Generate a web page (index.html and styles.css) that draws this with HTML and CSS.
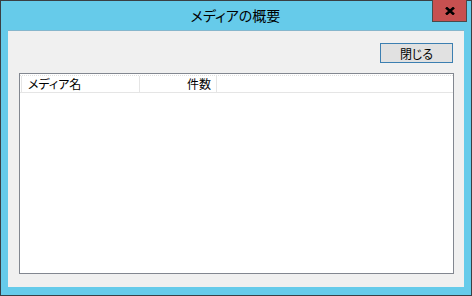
FILE: index.html
```html
<!DOCTYPE html>
<html lang="ja">
<head>
<meta charset="utf-8">
<link rel="stylesheet" href="styles.css">
</head>
<body>
<div class="window">
  <div class="titlebar">
    <span class="title">メディアの概要</span>
    <div class="close"><svg width="10" height="8" viewBox="0 0 10 8"><path d="M1 0.5 L9 7.5 M9 0.5 L1 7.5" stroke="#000" stroke-width="2.6"/></svg></div>
  </div>
  <div class="client">
    <div class="toolbar"><button class="btn">閉じる</button></div>
    <div class="list">
      <div class="header">
        <div class="col col-name">メディア名</div>
        <div class="col col-count">件数</div>
        <div class="col col-rest"></div>
      </div>
    </div>
  </div>
</div>
</body>
</html>
```
FILE: styles.css
```css
* { box-sizing: border-box; }
html, body { margin: 0; padding: 0; background: #2b2b2b; }
body { font-family: "Noto Sans CJK JP", "Noto Sans", sans-serif; font-feature-settings: "palt"; }
.window {
  position: relative;
  width: 472px;
  height: 296px;
  border: 1px solid #3a3f44;
  background: #66cbea;
  padding: 0 7px 8px 7px;
  display: flex;
  flex-direction: column;
}
.titlebar {
  height: 29px;
  display: flex;
  align-items: center;
  justify-content: center;
}
.title {
  font-size: 14px;
  color: #000;
  margin-top: -1px;
  margin-left: -1px;
}
.close {
  position: absolute;
  top: -1px;
  right: 4px;
  width: 35px;
  height: 22px;
  background: #c75050;
  border: 1px solid #4a4a4a;
  border-top: none;
  display: flex;
  align-items: center;
  justify-content: center;
  padding-top: 1px;
}
.client {
  flex: 1;
  background: #f0f0f0;
  border-top: 1px solid #86b6cc;
  padding: 12px 10px 13px 11px;
  display: flex;
  flex-direction: column;
}
.toolbar {
  display: flex;
  justify-content: flex-end;
  padding-right: 1px;
}
.btn {
  width: 73px;
  height: 20px;
  border: 1px solid #3c7fb1;
  background: #e1e1e1;
  font-family: inherit;
  font-feature-settings: "palt";
  font-size: 12px;
  color: #000;
  padding: 0;
  line-height: 17px;
}
.list {
  margin-top: 10px;
  flex: 1;
  border: 1px solid #828790;
  background: #fff;
}
.header {
  display: flex;
  height: 18px;
  border-bottom: 1px solid #e5e5e5;
  border-top: 1px dotted #e0e0e0;
  margin-top: 1px;
}
.col {
  font-size: 12px;
  line-height: 16px;
  color: #000;
  border-right: 1px solid #e5e5e5;
}
.col-name { width: 119px; padding-left: 6px; margin-left: 1px; border-left: 1px solid #e5e5e5; }
.col-count { width: 77px; text-align: right; padding-right: 5px; }
.col-rest { flex: 1; border-right: none; }
```
